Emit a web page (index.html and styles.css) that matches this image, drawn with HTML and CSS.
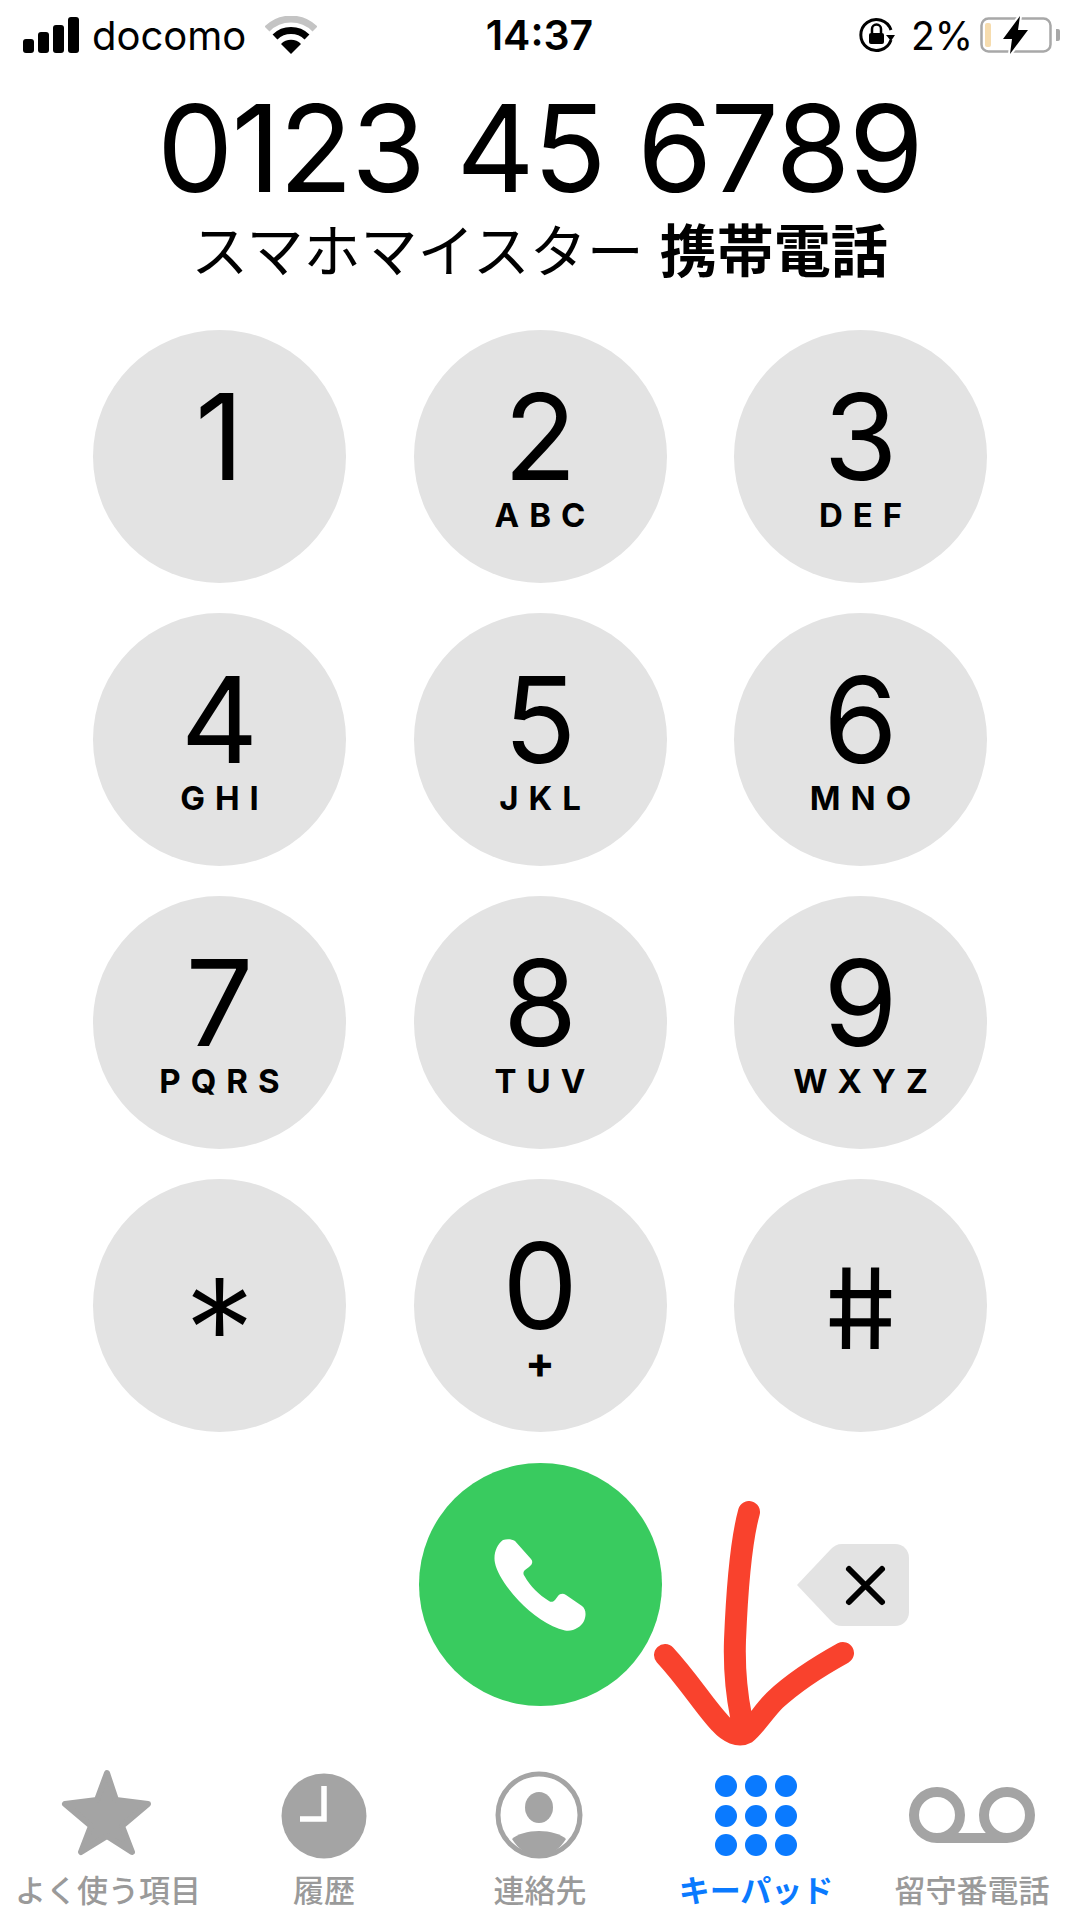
FILE: index.html
```html
<!DOCTYPE html>
<html lang="ja">
<head>
    <meta charset="UTF-8">
    <meta name="viewport" content="width=device-width, initial-scale=1.0">
    <title>キーパッド</title>
    <link rel="stylesheet" href="styles.css">
</head>
<body>
    <div class="status-bar">
        <div class="status-left">
            <svg class="signal" width="58" height="36" viewBox="0 0 58 36">
                <rect x="1" y="22" width="11" height="14" rx="3"/>
                <rect x="16" y="15" width="11" height="21" rx="3"/>
                <rect x="31" y="8" width="11" height="28" rx="3"/>
                <rect x="46" y="0" width="11" height="36" rx="3"/>
            </svg>
            <span class="carrier">docomo</span>
            <svg class="wifi" width="52" height="38" viewBox="0 0 52 38">
                <path d="M2 13 A34 34 0 0 1 50 13" fill="none" stroke="#c4c4c4" stroke-width="7"/>
                <path d="M10 21 A23 23 0 0 1 42 21" fill="none" stroke="#000" stroke-width="7"/>
                <path d="M26 38 L16 28 A14 14 0 0 1 36 28 Z"/>
            </svg>
        </div>
        <div class="status-time">14:37</div>
        <div class="status-right">
            <svg class="rotation-lock" width="38" height="38" viewBox="0 0 38 38">
                <path d="M33 24 A15.5 15.5 0 1 1 33 14" fill="none" stroke="#000" stroke-width="3"/>
                <path d="M28 19 L37 19 L33 25 Z"/>
                <rect x="11" y="17" width="15" height="11" rx="2"/>
                <path d="M14 17 V13 A4.5 4.5 0 0 1 23 13 V17" fill="none" stroke="#000" stroke-width="2.5"/>
            </svg>
            <span class="percent">2%</span>
            <svg class="battery" width="82" height="40" viewBox="0 0 82 40">
                <rect x="1.5" y="3.5" width="69" height="33" rx="7" fill="none" stroke="#a8a8a8" stroke-width="2.5"/>
                <rect x="5" y="8" width="6" height="24" rx="2" fill="#f6dcae"/>
                <path d="M76 14 h2 a2 2 0 0 1 2 2 v8 a2 2 0 0 1 -2 2 h-2 Z" fill="#a8a8a8"/>
                <path d="M40 1 L23 24 H32 L30 39 L48 15 H38 Z" stroke="#fff" stroke-width="4" paint-order="stroke"/>
            </svg>
        </div>
    </div>

    <div class="number">0123 45 6789</div>
    <div class="contact">スマホマイスター <b>携帯電話</b></div>

    <div class="keypad">
        <div class="key"><span class="digit">1</span></div>
        <div class="key"><span class="digit">2</span><span class="letters">ABC</span></div>
        <div class="key"><span class="digit">3</span><span class="letters">DEF</span></div>
        <div class="key"><span class="digit">4</span><span class="letters">GHI</span></div>
        <div class="key"><span class="digit">5</span><span class="letters">JKL</span></div>
        <div class="key"><span class="digit">6</span><span class="letters">MNO</span></div>
        <div class="key"><span class="digit">7</span><span class="letters">PQRS</span></div>
        <div class="key"><span class="digit">8</span><span class="letters">TUV</span></div>
        <div class="key"><span class="digit">9</span><span class="letters">WXYZ</span></div>
        <div class="key key-symbol"><span class="star">*</span></div>
        <div class="key"><span class="digit">0</span><span class="letters plus">+</span></div>
        <div class="key key-symbol"><span class="hash">#</span></div>
    </div>

    <div class="call-row">
        <div class="call-button">
            <svg width="92" height="92" viewBox="0 0 92 92">
                <path d="M9 1 C13 -0.5 18 0 21 2 L37 20 C39.5 23 38 26 35 28 L31 31 C29 33 29 35 30.5 37 C36 47 45 56 55 62 C57 63.5 59 63 61 61 L64 57 C66 54.5 69 54 72 56 L88 67 C92 70 92.5 76 90 82 C87 88 79 93 71 91.5 C55 88 37 75 25 62 C12 48 3 34 1 24 C-1 15 3 5 9 1 Z" fill="#fff"/>
            </svg>
        </div>
        <div class="delete-button">
            <svg width="112" height="82" viewBox="0 0 112 82">
                <path d="M0 41 L34 5 C37 2 40 0 45 0 H98 C106 0 112 6 112 14 V68 C112 76 106 82 98 82 H45 C40 82 37 80 34 77 Z" fill="#e3e3e3"/>
                <path d="M52 25 L85 58 M85 25 L52 58" stroke="#000" stroke-width="6" stroke-linecap="round"/>
            </svg>
        </div>
    </div>

    <div class="tab-bar">
        <div class="tab">
            <svg width="94" height="94" viewBox="0 0 94 94">
                <path d="M46 5 L55 32 L87 36 L61 58 L71 84 L46 68 L20 84 L30 58 L4 36 L36 32 Z" fill="#a4a4a4" stroke="#a4a4a4" stroke-width="6" stroke-linejoin="round"/>
            </svg>
            <span>よく使う項目</span>
        </div>
        <div class="tab">
            <svg width="90" height="94" viewBox="0 0 90 94">
                <circle cx="45" cy="48" r="42.5" fill="#a4a4a4"/>
                <path d="M45 18 V51 H21" fill="none" stroke="#fff" stroke-width="5.5"/>
            </svg>
            <span>履歴</span>
        </div>
        <div class="tab">
            <svg width="90" height="94" viewBox="0 0 90 94">
                <circle cx="44" cy="47" r="41" fill="none" stroke="#a4a4a4" stroke-width="5"/>
                <ellipse cx="44" cy="39.5" rx="14" ry="15.5" fill="#a4a4a4"/>
                <path d="M17 71 C22 66 33 63 44 63 C55 63 66 66 71 71 C65 81 55 88 44 88 C33 88 23 81 17 71 Z" fill="#a4a4a4"/>
            </svg>
            <span>連絡先</span>
        </div>
        <div class="tab tab-active">
            <svg width="90" height="94" viewBox="0 0 90 94">
                <circle cx="15" cy="18" r="11"/><circle cx="45" cy="18" r="11"/><circle cx="75" cy="18" r="11"/>
                <circle cx="15" cy="48" r="11"/><circle cx="45" cy="48" r="11"/><circle cx="75" cy="48" r="11"/>
                <circle cx="15" cy="77" r="11"/><circle cx="45" cy="77" r="11"/><circle cx="75" cy="77" r="11"/>
            </svg>
            <span>キーパッド</span>
        </div>
        <div class="tab">
            <svg width="130" height="94" viewBox="0 0 130 94">
                <circle cx="30" cy="47" r="23" fill="none" stroke="#a4a4a4" stroke-width="10"/>
                <circle cx="100" cy="47" r="23" fill="none" stroke="#a4a4a4" stroke-width="10"/>
                <path d="M30 70 H100" stroke="#a4a4a4" stroke-width="10"/>
            </svg>
            <span>留守番電話</span>
        </div>
    </div>

    <svg class="arrow" width="210" height="250" viewBox="0 0 210 250">
        <path d="M95 11 C87 40 83 90 81 139 C80 170 83 195 87 215 M11 154 C35 180 50 205 66 222 C75 232 85 236 92 232 C100 226 110 210 121 199 C135 186 160 168 189 152" fill="none" stroke="#f9422d" stroke-width="22" stroke-linecap="round" stroke-linejoin="round"/>
    </svg>
</body>
</html>
```

FILE: styles.css
```css
body {
    margin: 0;
    width: 1079px;
    height: 1917px;
    overflow: hidden;
    position: relative;
    background-color: #fff;
    color: #000;
    font-family: 'Inter', 'Noto Sans CJK JP', sans-serif;
}

/* status bar */
.status-bar {
    display: grid;
    grid-template-columns: 1fr auto 1fr;
    align-items: center;
    height: 70px;
    padding: 0 22px;
}
.status-left, .status-right {
    display: flex;
    align-items: center;
}
.status-left {
    gap: 12px;
}
.status-right {
    justify-content: flex-end;
    gap: 12px;
}
.carrier {
    font-size: 40px;
}
.wifi {
    margin-left: 7px;
}
.status-time {
    font-size: 41px;
    font-weight: 600;
}
.rotation-lock {
    margin-right: 3px;
}
.percent {
    font-size: 39px;
    margin-right: -5px;
}
.battery {
    margin-right: -5px;
}

/* number display */
.number {
    margin-top: 13px;
    font-size: 121px;
    font-weight: 400;
    line-height: 130px;
    text-align: center;
    letter-spacing: -1.7px;
}
.contact {
    margin-top: 3px;
    font-size: 57px;
    font-weight: 400;
    line-height: 72px;
    text-align: center;
}
.contact b {
    font-weight: 700;
}

/* keys */
.keypad, .call-row {
    display: grid;
    grid-template-columns: repeat(3, 253px);
    column-gap: 67.5px;
    padding-left: 93px;
}
.keypad {
    margin-top: 42px;
    row-gap: 30px;
}
.key {
    width: 253px;
    height: 253px;
    border-radius: 50%;
    background-color: #e3e3e3;
    display: flex;
    flex-direction: column;
    align-items: center;
    padding-top: 57px;
    box-sizing: border-box;
}
.digit {
    font-size: 120px;
    font-weight: 400;
    line-height: 100px;
}
.letters {
    margin-top: 8px;
    margin-right: -10px;
    font-size: 33px;
    font-weight: 700;
    line-height: 40px;
    letter-spacing: 10px;
}
.plus {
    margin-top: 8px;
    margin-right: 0;
    letter-spacing: 0;
    font-size: 44px;
    line-height: 36px;
}
.key-symbol {
    justify-content: center;
    padding-top: 0;
}
.star {
    margin-top: 46px;
    font-size: 142px;
    font-weight: 300;
    line-height: 100px;
}
/* the font's # leans, skew it back upright */
.hash {
    margin-top: 4px;
    font-size: 112px;
    font-weight: 400;
    line-height: 110px;
    transform: skewX(9deg);
}

/* call row */
.call-row {
    margin-top: 31px;
    align-items: center;
}
.call-button {
    grid-column: 2;
    justify-self: center;
    width: 243px;
    height: 243px;
    border-radius: 50%;
    background-color: #39cb5f;
    display: flex;
    align-items: center;
    justify-content: center;
}
.delete-button {
    grid-column: 3;
    justify-self: center;
    margin-left: -16px;
    display: flex;
}

/* tab bar */
.tab-bar {
    display: grid;
    grid-template-columns: repeat(5, 216px);
    margin-top: 62px;
}
.tab {
    display: flex;
    flex-direction: column;
    align-items: center;
    gap: 13px;
    color: #9a9a9a;
    font-size: 31px;
    font-weight: 500;
    line-height: 32px;
}
.tab-active {
    color: #0a7aff;
    fill: #0a7aff;
    font-weight: 700;
}

/* hand drawn red arrow over the screenshot */
.arrow {
    position: absolute;
    left: 654px;
    top: 1501px;
}
```
